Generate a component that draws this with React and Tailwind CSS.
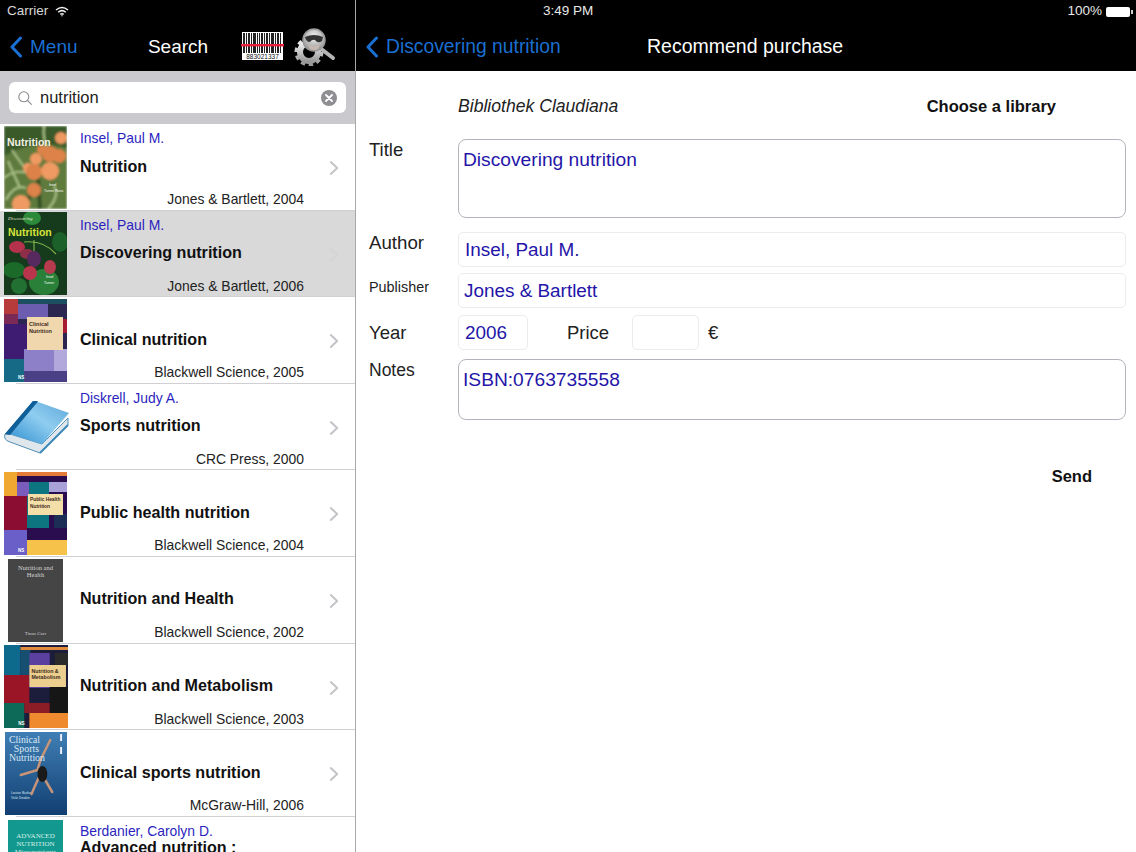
import React from "react";

const Back = ({ className }) => (
  <svg viewBox="0 0 14 22" className={className} fill="none">
    <path d="M11.5 2 L3 11 L11.5 20" stroke="#1a6fd2" strokeWidth="3" strokeLinecap="round" strokeLinejoin="round" />
  </svg>
);

const Wifi = () => (
  <svg viewBox="0 0 14 11" className="w-[14px] h-[11px]" fill="none" stroke="#f2f2f2" strokeWidth="1.5">
    <path d="M1 4 Q7 -1 13 4" />
    <path d="M3.2 6.3 Q7 3 10.8 6.3" />
    <path d="M5.3 8.4 Q7 7 8.7 8.4" />
    <circle cx="7" cy="9.8" r=".7" fill="#f2f2f2" stroke="none" />
  </svg>
);

const Barcode = () => {
  const bars = [[1,2],[4,1],[6,2],[9,1],[11,3],[15,1],[17,1],[19,2],[22,1],[24,2],[27,1],[29,3],[33,1],[35,2],[38,1]];
  return (
    <svg viewBox="0 0 43 29" className="w-[43px] h-[29px]">
      <rect x="1" width="41" height="28" fill="#fff" />
      {bars.map(([x, w], i) => <rect key={i} x={x + 1} y="1" width={w} height="20" fill="#222" />)}
      <rect x="0" y="12" width="43" height="2.4" fill="#e8203a" />
      <text x="21.5" y="27" textAnchor="middle" fontSize="6.5" fill="#111" fontFamily="Liberation Sans, sans-serif">883021337</text>
    </svg>
  );
};

const SearchGear = () => (
  <svg viewBox="0 0 43 40" className="w-[43px] h-[40px]">
    <defs>
      <radialGradient id="lens" cx=".5" cy=".35" r=".7">
        <stop offset="0" stopColor="#f4f4f4" />
        <stop offset="1" stopColor="#8b8b8b" />
      </radialGradient>
      <linearGradient id="gear" x1="0" y1="0" x2="0" y2="1">
        <stop offset="0" stopColor="#f0f0f0" />
        <stop offset="1" stopColor="#9a9a9a" />
      </linearGradient>
    </defs>
    <circle cx="15" cy="26" r="12.5" fill="none" stroke="url(#gear)" strokeWidth="4" strokeDasharray="4.2 3.6" />
    <circle cx="15" cy="26" r="9" fill="none" stroke="url(#gear)" strokeWidth="6" />
    <circle cx="15" cy="26" r="3.6" fill="#000" />
    <path d="M26 22 L39 32" stroke="#b5b5b5" strokeWidth="4" strokeLinecap="round" />
    <circle cx="20" cy="14" r="11" fill="url(#lens)" stroke="#9a9a9a" strokeWidth="1.5" />
    <path d="M11 11 Q20 7 29 11 L28 15 Q24 18 21 14 Q18 13 16 16 Q12 16 11 11Z" fill="#333" />
    <path d="M14 18 Q20 23 26 18 L24 23 Q20 25 16 23Z" fill="#c9b9b0" />
  </svg>
);

const Soft = ({ id, d = 0.7 }) => (
  <filter id={id} x="-5%" y="-5%" width="110%" height="110%">
    <feGaussianBlur stdDeviation={d} />
  </filter>
);

const patch = (id, rects, box, title, titleY, fs) => (
  <svg viewBox="0 0 63 83" className="w-full h-full" preserveAspectRatio="none">
    <defs><Soft id={id} d={0.5} /></defs>
    <g filter={`url(#${id})`}>
      {rects.map((r, i) => <rect key={i} x={r[0]} y={r[1]} width={r[2]} height={r[3]} fill={r[4]} />)}
      <rect x={box[0]} y={box[1]} width={box[2]} height={box[3]} fill={box[4]} />
    </g>
    {title.map((t, i) => (
      <text key={i} x={box[0] + 2} y={titleY + i * 6.5} fontSize={fs} fontWeight="bold" fill="#3b2a20" fontFamily="Liberation Sans, sans-serif">{t}</text>
    ))}
    <text x="14" y="80" fontSize="4.5" fontWeight="bold" fill="#fff" fontFamily="Liberation Sans, sans-serif">NS</text>
  </svg>
);

const Peach = () => (
  <svg viewBox="0 0 63 83" className="w-full h-full" preserveAspectRatio="none">
    <defs><Soft id="pf" d={0.9} /></defs>
    <g filter="url(#pf)">
      <rect width="63" height="83" fill="#5f7a3e" />
      <path d="M0 0 H63 V22 Q30 12 0 30Z" fill="#3a5a2b" />
      <path d="M0 52 Q12 42 26 48 M2 74 Q10 58 22 62 M8 24 Q16 36 24 46 M40 0 Q38 15 46 26 M50 60 Q56 70 44 83 M4 35 L16 62" stroke="#a6bd82" strokeWidth="2.2" fill="none" />
      <path d="M20 83 L30 60 M36 83 L34 50" stroke="#365327" strokeWidth="4" fill="none" />
      {[[32,33,6],[46,28,8],[24,42,5],[30,46,8],[46,45,9],[30,64,7],[17,78,9],[55,30,7],[57,12,6],[38,24,5]].map(([x,y,r],i) => <circle key={i} cx={x} cy={y} r={r} fill={i % 2 ? "#dd8249" : "#ee9a62"} />)}
    </g>
    <text x="3" y="20" fontSize="10.5" fontWeight="bold" fill="#f3f1e4" fontFamily="Liberation Sans, sans-serif">Nutrition</text>
    <text x="45" y="60" fontSize="3.5" fill="#fff" fontFamily="Liberation Sans, sans-serif">Insel</text>
    <text x="40" y="66" fontSize="3.5" fill="#fff" fontFamily="Liberation Sans, sans-serif">Turner Ross</text>
  </svg>
);

const Berry = () => (
  <svg viewBox="0 0 63 83" className="w-full h-full" preserveAspectRatio="none">
    <defs><Soft id="bf" d={0.7} /></defs>
    <g filter="url(#bf)">
      <rect width="63" height="83" fill="#123a1c" />
      <ellipse cx="28" cy="6" rx="9" ry="7" fill="#2f8a3a" />
      <ellipse cx="10" cy="58" rx="11" ry="8" fill="#1c6a2c" />
      <ellipse cx="40" cy="70" rx="15" ry="13" fill="#2c8038" />
      <ellipse cx="15" cy="74" rx="8" ry="8" fill="#246f30" />
      <ellipse cx="56" cy="30" rx="8" ry="10" fill="#1d6029" />
      <path d="M20 30 Q40 28 52 42 M30 28 L30 50" stroke="#7faf4a" strokeWidth="1.2" fill="none" />
      <ellipse cx="13" cy="35" rx="8" ry="6" fill="#b4334c" />
      <ellipse cx="23" cy="42" rx="7" ry="5" fill="#8e2f4a" />
      <ellipse cx="30" cy="47" rx="7" ry="8" fill="#57295e" />
      <ellipse cx="46" cy="55" rx="6" ry="7" fill="#b63a4e" />
      <ellipse cx="26" cy="61" rx="7" ry="7" fill="#b8364c" />
    </g>
    <text x="4" y="8" fontSize="5" fontStyle="italic" fill="#e8e8d0" fontFamily="Liberation Serif, serif">Discovering</text>
    <text x="4" y="24" fontSize="10.5" fontWeight="bold" fill="#d6e43a" fontFamily="Liberation Sans, sans-serif">Nutrition</text>
    <text x="42" y="66" fontSize="3.5" fill="#fff" fontFamily="Liberation Sans, sans-serif">Insel</text>
    <text x="40" y="72" fontSize="3.5" fill="#fff" fontFamily="Liberation Sans, sans-serif">Turner</text>
  </svg>
);

const ClinicalCover = () => patch("cf", [
  [0,0,63,83,"#2c2550"],[14,0,49,5,"#1b4f5e"],[0,0,14,15,"#b83a3a"],[0,15,14,10,"#7a2a55"],[0,25,23,35,"#3d1c72"],
  [0,60,20,23,"#186a86"],[20,50,30,25,"#8d7fc8"],[20,72,43,11,"#4a3f86"],[14,5,30,15,"#6c5db0"],[58,20,5,14,"#a61f30"],[50,50,13,22,"#b2a8dc"],
], [23,18,36,33,"#f1d7ae"], ["Clinical","Nutrition"], 27, 5.5);

const PublicCover = () => patch("uf", [
  [0,0,63,83,"#2a1050"],[0,0,13,24,"#f0a830"],[13,0,50,4,"#e27b38"],[0,24,23,34,"#8c1030"],[0,58,23,25,"#6b5fc8"],
  [23,68,40,15,"#f6c24a"],[23,10,22,46,"#0f7480"],[45,10,18,10,"#a9a2d8"],[13,10,12,14,"#7a5cbc"],[50,42,13,14,"#1f2d55"],
], [24,22,35,21,"#f5dfa9"], ["Public Health","Nutrition"], 29, 4.8);

const GreyCover = () => (
  <svg viewBox="0 0 55 83" className="w-full h-full" preserveAspectRatio="none">
    <rect width="55" height="83" fill="#454545" />
    <text x="27.5" y="11" textAnchor="middle" fontSize="6.5" fill="#d6d6d6" fontFamily="Liberation Serif, serif">Nutrition and</text>
    <text x="27.5" y="18" textAnchor="middle" fontSize="6.5" fill="#d6d6d6" fontFamily="Liberation Serif, serif">Health</text>
    <text x="27.5" y="76" textAnchor="middle" fontSize="5" fill="#cfcfcf" fontFamily="Liberation Serif, serif">Tinus Carr</text>
  </svg>
);

const MetabCover = () => patch("mf", [
  [0,0,63,83,"#1a1a3a"],[16,2,47,3,"#e08a3c"],[0,0,16,30,"#0f6a8c"],[16,5,10,25,"#164f70"],[0,30,25,28,"#9a1428"],[0,58,20,25,"#0f6a58"],
  [25,8,20,35,"#5c3fa0"],[25,68,38,15,"#ef8a2e"],[20,58,43,10,"#8c1a28"],[50,8,13,12,"#2a2a2a"],[45,42,18,26,"#141414"],
], [25,20,36,22,"#eccf8e"], ["Nutrition &","Metabolism"], 28, 5.2);

const SportsCover = () => (
  <svg viewBox="0 0 63 83" className="w-full h-full" preserveAspectRatio="none">
    <defs>
      <linearGradient id="sp" x1="0" y1="0" x2="0" y2="1">
        <stop offset="0" stopColor="#3f7fb5" />
        <stop offset="1" stopColor="#123f72" />
      </linearGradient>
    </defs>
    <rect width="63" height="83" fill="url(#sp)" />
    <path d="M16 43 L33 38 L36 28 L46 8 M36 40 L48 60 M36 42 L30 55 L27 62" stroke="#c89478" strokeWidth="2.5" fill="none" strokeLinecap="round" />
    <ellipse cx="38" cy="42" rx="5" ry="8" fill="#1a1a1a" />
    <rect x="56" y="2" width="2" height="7" fill="#eef" />
    <rect x="56" y="15" width="2" height="7" fill="#eef" />
    <g fontFamily="Liberation Serif, serif" fontSize="10" fill="#dbe8f4">
      <text x="4" y="11">Clinical</text>
      <text x="9" y="20">Sports</text>
      <text x="4" y="29">Nutrition</text>
    </g>
    <text x="6" y="62" fontSize="3.5" fill="#dbe8f4" fontFamily="Liberation Sans, sans-serif">Louise Burke</text>
    <text x="6" y="67" fontSize="3.5" fill="#dbe8f4" fontFamily="Liberation Sans, sans-serif">Vicki Deakin</text>
  </svg>
);

const AdvCover = () => (
  <svg viewBox="0 0 55 83" className="w-full h-full" preserveAspectRatio="none">
    <rect width="55" height="83" fill="#12988f" />
    <g fontFamily="Liberation Serif, serif" fontSize="7" fill="#d8f0e8" textAnchor="middle">
      <text x="27.5" y="18">ADVANCED</text>
      <text x="27.5" y="26">NUTRITION</text>
      <text x="27.5" y="34">Micronutrients</text>
    </g>
  </svg>
);

const BookIcon = () => (
  <svg viewBox="0 0 68 56" className="w-[68px] h-[56px]">
    <defs>
      <linearGradient id="bk" x1="0" y1="1" x2="1" y2="0">
        <stop offset="0" stopColor="#2f8fd0" />
        <stop offset=".55" stopColor="#8fcdf0" />
        <stop offset="1" stopColor="#5da6d8" />
      </linearGradient>
      <linearGradient id="sp2" x1="0" y1="1" x2="1" y2="0">
        <stop offset="0" stopColor="#0f5f98" />
        <stop offset="1" stopColor="#2a86bd" />
      </linearGradient>
    </defs>
    <path d="M3 36 Q1 42 8 44 L38 55 L66 27 L66 20 L40 46 L8 36Z" fill="#dfe6ec" stroke="#4f90b8" strokeWidth="1" />
    <path d="M8 36 L40 46 L67 15 L36 4Z" fill="url(#bk)" />
    <path d="M3 36 L8 36 L36 4 L31 3Z" fill="url(#sp2)" />
    <path d="M3 36 L31 3 L36 3 L8 37Z" fill="#0f5f98" />
    <path d="M38 55 L66 27" stroke="#3a88b8" strokeWidth="2" fill="none" />
  </svg>
);

const books = [
  { author: "Insel, Paul M.", title: "Nutrition", pub: "Jones & Bartlett, 2004", cover: <Peach />, w: "w-[63px]", ml: "ml-[4px]" },
  { author: "Insel, Paul M.", title: "Discovering nutrition", pub: "Jones & Bartlett, 2006", cover: <Berry />, w: "w-[63px]", ml: "ml-[4px]", selected: true },
  { title: "Clinical nutrition", pub: "Blackwell Science, 2005", cover: <ClinicalCover />, w: "w-[63px]", ml: "ml-[4px]" },
  { author: "Diskrell, Judy A.", title: "Sports nutrition", pub: "CRC Press, 2000", cover: <BookIcon />, w: "w-[68px]", ml: "ml-[2px]", book: true },
  { title: "Public health nutrition", pub: "Blackwell Science, 2004", cover: <PublicCover />, w: "w-[63px]", ml: "ml-[4px]" },
  { title: "Nutrition and Health", pub: "Blackwell Science, 2002", cover: <GreyCover />, w: "w-[55px]", ml: "ml-[8px]" },
  { title: "Nutrition and Metabolism", pub: "Blackwell Science, 2003", cover: <MetabCover />, w: "w-[64px]", ml: "ml-[3.5px]" },
  { title: "Clinical sports nutrition", pub: "McGraw-Hill, 2006", cover: <SportsCover />, w: "w-[62px]", ml: "ml-[4.5px]" },
];

function Row({ b }) {
  return (
    <div className={`relative h-[86.6px] shrink-0 flex items-center after:absolute after:left-4 after:right-0 after:bottom-0 after:h-px after:bg-[#d0d0d4] ${b.selected ? "bg-[#d9d9d9]" : "bg-white"}`}>
      <div className={`${b.ml} ${b.w} ${b.book ? "h-[56px] -mt-[2px]" : "h-[83px]"} shrink-0 relative z-10`}>{b.cover}</div>
      <div className="absolute left-[80px] right-[51px] top-0 bottom-0 flex flex-col">
        <div className="mt-[5px] h-[18px] leading-[18px] text-[13.9px] text-[#2c1fc0]">{b.author}</div>
        <div className="mt-[8.5px] h-[20px] leading-[20px] text-[16.1px] font-bold text-[#111]">{b.title}</div>
        <div className="mt-[14.5px] h-[18px] leading-[18px] text-[13.9px] text-right text-[#222]">{b.pub}</div>
      </div>
      <svg viewBox="0 0 11 17" className={`absolute right-[16px] top-[36px] w-[10px] h-[16px] ${b.selected ? "opacity-20" : ""}`} fill="none">
        <path d="M2 2 L9 8.5 L2 15" stroke="#c4c4c8" strokeWidth="2.2" strokeLinecap="round" strokeLinejoin="round" />
      </svg>
    </div>
  );
}

const Field = ({ children, className = "" }) => (
  <div className={`h-[35px] rounded-[5px] border border-[#ececf0] text-[18.9px] leading-[33px] text-[#2415a8] ${className}`}>{children}</div>
);

const Area = ({ children, className = "" }) => (
  <div className={`rounded-[8px] border border-[#b4b4bc] pl-[4px] pt-[7px] text-[19.2px] leading-[26px] text-[#2415a8] ${className}`}>{children}</div>
);

export default function App() {
  return (
    <div className="w-[1136px] h-[852px] overflow-hidden flex bg-white text-black font-['Liberation_Sans',Arial,sans-serif]">
      <aside className="w-[356px] shrink-0 h-full flex flex-col border-r border-[#a8a8a8]">
        <div className="h-[71px] shrink-0 bg-black">
          <div className="h-[23px] flex items-center pl-[7px] gap-[7px] text-[13.5px] text-[#d8d8d8]">
            <span>Carrier</span>
            <Wifi />
          </div>
          <div className="h-[47px] flex items-center pl-[9px]">
            <Back className="w-[14px] h-[22px]" />
            <span className="ml-[7px] mt-[1px] w-[117px] text-[19px] text-[#1a6fd2]">Menu</span>
            <span className="w-[62px] mt-[2px] text-center text-[19px] font-medium text-white">Search</span>
            <span className="ml-[32px]"><Barcode /></span>
            <span className="ml-[10px] mt-[-2px]"><SearchGear /></span>
          </div>
        </div>
        <div className="h-[53px] shrink-0 bg-[#c9c9ce] px-[9px] pt-[11px]">
          <div className="h-[31px] rounded-[6px] bg-white flex items-center pl-[9px] pr-[9px]">
            <svg viewBox="0 0 14 14" className="w-[14px] h-[14px]" fill="none" stroke="#8e8e93" strokeWidth="1.1">
              <circle cx="5.8" cy="5.8" r="5" />
              <path d="M9.5 9.5 L13.4 13.4" strokeLinecap="round" />
            </svg>
            <span className="ml-[8px] flex-1 text-[16.5px] text-[#222]">nutrition</span>
            <svg viewBox="0 0 16 16" className="w-[16px] h-[16px]">
              <circle cx="8" cy="8" r="8" fill="#8e8e93" />
              <path d="M5 5 L11 11 M11 5 L5 11" stroke="#fff" strokeWidth="1.8" strokeLinecap="round" />
            </svg>
          </div>
        </div>
        <div className="flex-1 min-h-0 flex flex-col overflow-hidden">
          {books.map((b) => <Row key={b.title} b={b} />)}
          <div className="relative h-[40px] shrink-0 bg-white">
            <div className="absolute left-[8px] top-[3px] w-[55px] h-[83px]"><AdvCover /></div>
            <div className="absolute left-[80px] top-[5px] text-[13.9px] leading-[18px] text-[#2c1fc0]">Berdanier, Carolyn D.</div>
            <div className="absolute left-[80px] top-[20px] text-[16.1px] leading-[20px] font-bold text-[#111]">Advanced nutrition :</div>
          </div>
        </div>
      </aside>

      <main className="flex-1 min-w-0 h-full flex flex-col">
        <div className="h-[71px] shrink-0 bg-black">
          <div className="h-[23px] flex items-center text-[13.5px] text-[#e8e8e8]">
            <span className="ml-[187px]">3:49 PM</span>
            <span className="ml-auto">100%</span>
            <span className="ml-[4px] mr-[3px] flex items-center">
              <span className="block w-[24px] h-[10px] rounded-[2px] bg-white" />
              <span className="block w-[2px] h-[4px] bg-[#ccc] ml-[1px]" />
            </span>
          </div>
          <div className="h-[47px] flex items-center pl-[9px]">
            <Back className="w-[14px] h-[22px]" />
            <span className="ml-[7px] mt-[2px] w-[261px] text-[19.3px] text-[#1a6fd2]">Discovering nutrition</span>
            <span className="mt-[1px] text-[19.5px] font-medium text-white">Recommend purchase</span>
          </div>
        </div>

        <div className="flex-1 flex flex-col pl-[13px] pr-[10px]">
          <div className="flex items-center h-[36px] mt-[17px]">
            <span className="w-[89px]" />
            <span className="italic text-[17.6px] text-[#222]">Bibliothek Claudiana</span>
            <span className="ml-auto mr-[70px] font-bold text-[16.5px] text-[#111]">Choose a library</span>
          </div>
          <div className="flex mt-[15px]">
            <span className="w-[89px] text-[18.5px] leading-[22px] text-[#222]">Title</span>
            <Area className="flex-1 h-[79px]">Discovering nutrition</Area>
          </div>
          <div className="flex items-center mt-[14px]">
            <span className="w-[89px] text-[18.7px] -mt-[12px] text-[#222]">Author</span>
            <Field className="flex-1 pl-[6px]">Insel, Paul M.</Field>
          </div>
          <div className="flex items-center mt-[6px]">
            <span className="w-[89px] text-[14.4px] -mt-[5px] text-[#222]">Publisher</span>
            <Field className="flex-1 pl-[5px]">Jones &amp; Bartlett</Field>
          </div>
          <div className="flex items-center mt-[7px]">
            <span className="w-[89px] text-[18.5px] text-[#222]">Year</span>
            <Field className="w-[70px] pl-[6px]">2006</Field>
            <span className="ml-[39px] w-[65px] text-[18.5px] text-[#222]">Price</span>
            <Field className="w-[67px]" />
            <span className="ml-[9px] text-[18.5px] text-[#222]">€</span>
          </div>
          <div className="flex mt-[9px]">
            <span className="w-[89px] text-[17.5px] leading-[22px] text-[#222]">Notes</span>
            <Area className="flex-1 h-[61px]">ISBN:0763735558</Area>
          </div>
          <div className="mt-[44px] mr-[34px] text-right font-bold text-[16.5px] text-[#111]">Send</div>
        </div>
      </main>
    </div>
  );
}
